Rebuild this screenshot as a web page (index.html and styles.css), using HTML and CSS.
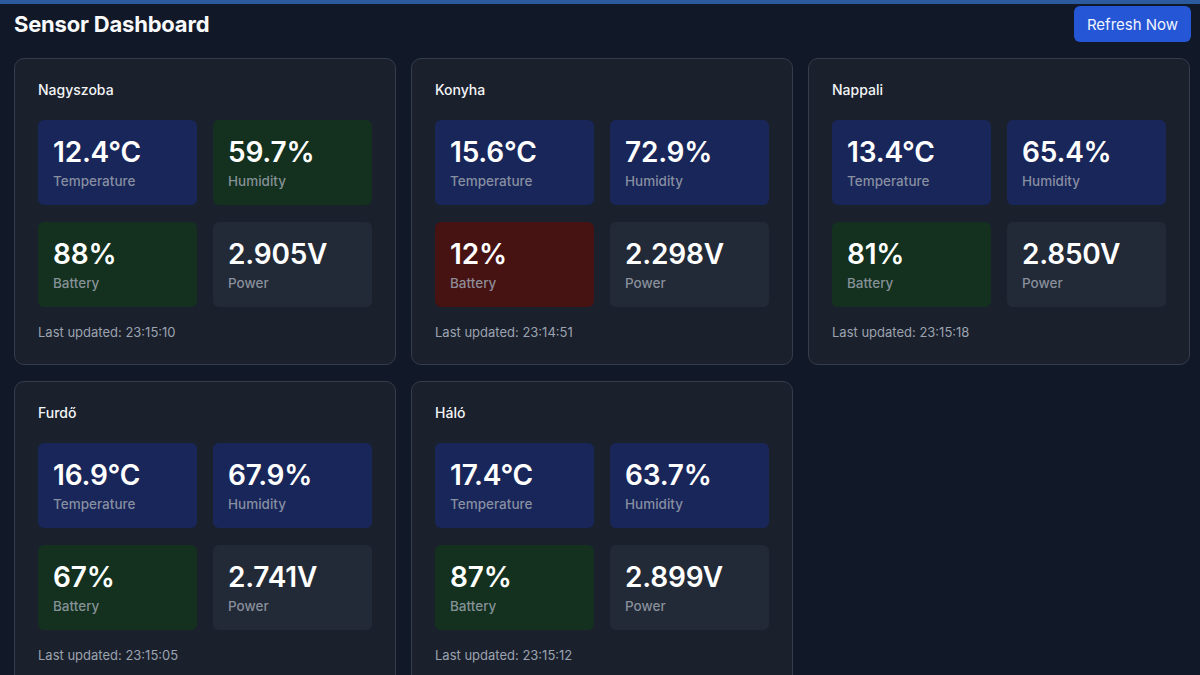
FILE: index.html
```html
<!DOCTYPE html>
<html lang="hu">
<head>
<meta charset="utf-8">
<title>Sensor Dashboard</title>
<link rel="stylesheet" href="styles.css">
</head>
<body>
<div class="topbar"></div>
<div class="page">
  <header class="header">
    <h1 class="title">Sensor Dashboard</h1>
    <button class="refresh">Refresh Now</button>
  </header>
  <main class="grid">
    <section class="card">
      <h2 class="room">Nagyszoba</h2>
      <div class="metrics">
        <div class="tile blue"><div class="value">12.4°C</div><div class="label">Temperature</div></div>
        <div class="tile green"><div class="value">59.7%</div><div class="label">Humidity</div></div>
        <div class="tile green"><div class="value">88%</div><div class="label">Battery</div></div>
        <div class="tile gray"><div class="value">2.905V</div><div class="label">Power</div></div>
      </div>
      <p class="updated">Last updated: 23:15:10</p>
    </section>
    <section class="card">
      <h2 class="room">Konyha</h2>
      <div class="metrics">
        <div class="tile blue"><div class="value">15.6°C</div><div class="label">Temperature</div></div>
        <div class="tile blue"><div class="value">72.9%</div><div class="label">Humidity</div></div>
        <div class="tile red"><div class="value">12%</div><div class="label">Battery</div></div>
        <div class="tile gray"><div class="value">2.298V</div><div class="label">Power</div></div>
      </div>
      <p class="updated">Last updated: 23:14:51</p>
    </section>
    <section class="card">
      <h2 class="room">Nappali</h2>
      <div class="metrics">
        <div class="tile blue"><div class="value">13.4°C</div><div class="label">Temperature</div></div>
        <div class="tile blue"><div class="value">65.4%</div><div class="label">Humidity</div></div>
        <div class="tile green"><div class="value">81%</div><div class="label">Battery</div></div>
        <div class="tile gray"><div class="value">2.850V</div><div class="label">Power</div></div>
      </div>
      <p class="updated">Last updated: 23:15:18</p>
    </section>
    <section class="card">
      <h2 class="room">Furdő</h2>
      <div class="metrics">
        <div class="tile blue"><div class="value">16.9°C</div><div class="label">Temperature</div></div>
        <div class="tile blue"><div class="value">67.9%</div><div class="label">Humidity</div></div>
        <div class="tile green"><div class="value">67%</div><div class="label">Battery</div></div>
        <div class="tile gray"><div class="value">2.741V</div><div class="label">Power</div></div>
      </div>
      <p class="updated">Last updated: 23:15:05</p>
    </section>
    <section class="card">
      <h2 class="room">Háló</h2>
      <div class="metrics">
        <div class="tile blue"><div class="value">17.4°C</div><div class="label">Temperature</div></div>
        <div class="tile blue"><div class="value">63.7%</div><div class="label">Humidity</div></div>
        <div class="tile green"><div class="value">87%</div><div class="label">Battery</div></div>
        <div class="tile gray"><div class="value">2.899V</div><div class="label">Power</div></div>
      </div>
      <p class="updated">Last updated: 23:15:12</p>
    </section>
  </main>
</div>
</body>
</html>
```
FILE: styles.css
```css
* { box-sizing: border-box; }
html, body {
  margin: 0;
  padding: 0;
  background: #111827;
  color: #f3f4f6;
  font-family: Inter, "Noto Sans", "Liberation Sans", sans-serif;
  overflow: hidden;
}
.topbar {
  height: 4px;
  background: #2c5a9e;
}
.page {
  padding: 2px 9px 0 14px;
}
.header {
  display: flex;
  align-items: center;
  justify-content: space-between;
  height: 36px;
  margin-bottom: 16px;
}
.title {
  margin: 0;
  font-size: 22px;
  font-weight: 700;
  color: #f9fafb;
  letter-spacing: -0.2px;
}
.refresh {
  height: 36px;
  width: 117px;
  border: none;
  border-radius: 6px;
  background: #2556d6;
  color: #f1f5ff;
  font-family: inherit;
  font-size: 15px;
  font-weight: 400;
  padding: 0;
}
.grid {
  display: grid;
  grid-template-columns: repeat(3, 382px);
  column-gap: 15px;
  row-gap: 16px;
}
.card {
  background: #1a202c;
  border: 1px solid #353c4b;
  border-radius: 10px;
  padding: 21px 23px 22px;
}
.room {
  margin: 0 0 20px;
  font-size: 14px;
  font-weight: 500;
  line-height: 20px;
  color: #f3f4f6;
}
.metrics {
  display: grid;
  grid-template-columns: 1fr 1fr;
  column-gap: 16px;
  row-gap: 17px;
}
.tile {
  height: 85px;
  border-radius: 6px;
  padding: 15px 15px 0;
}
.tile.blue { background: #19265a; }
.tile.green { background: #13311e; }
.tile.red { background: #461212; }
.tile.gray { background: #232a37; }
.value {
  font-size: 28px;
  font-weight: 600;
  line-height: 34px;
  color: #ffffff;
  letter-spacing: -0.2px;
}
.label {
  margin-top: 2px;
  font-size: 13.5px;
  font-weight: 500;
  line-height: 20px;
  color: rgba(156, 163, 175, 0.85);
}
.updated {
  margin: 15px 0 0;
  font-size: 13px;
  line-height: 20px;
  color: #9ca3af;
}
```
